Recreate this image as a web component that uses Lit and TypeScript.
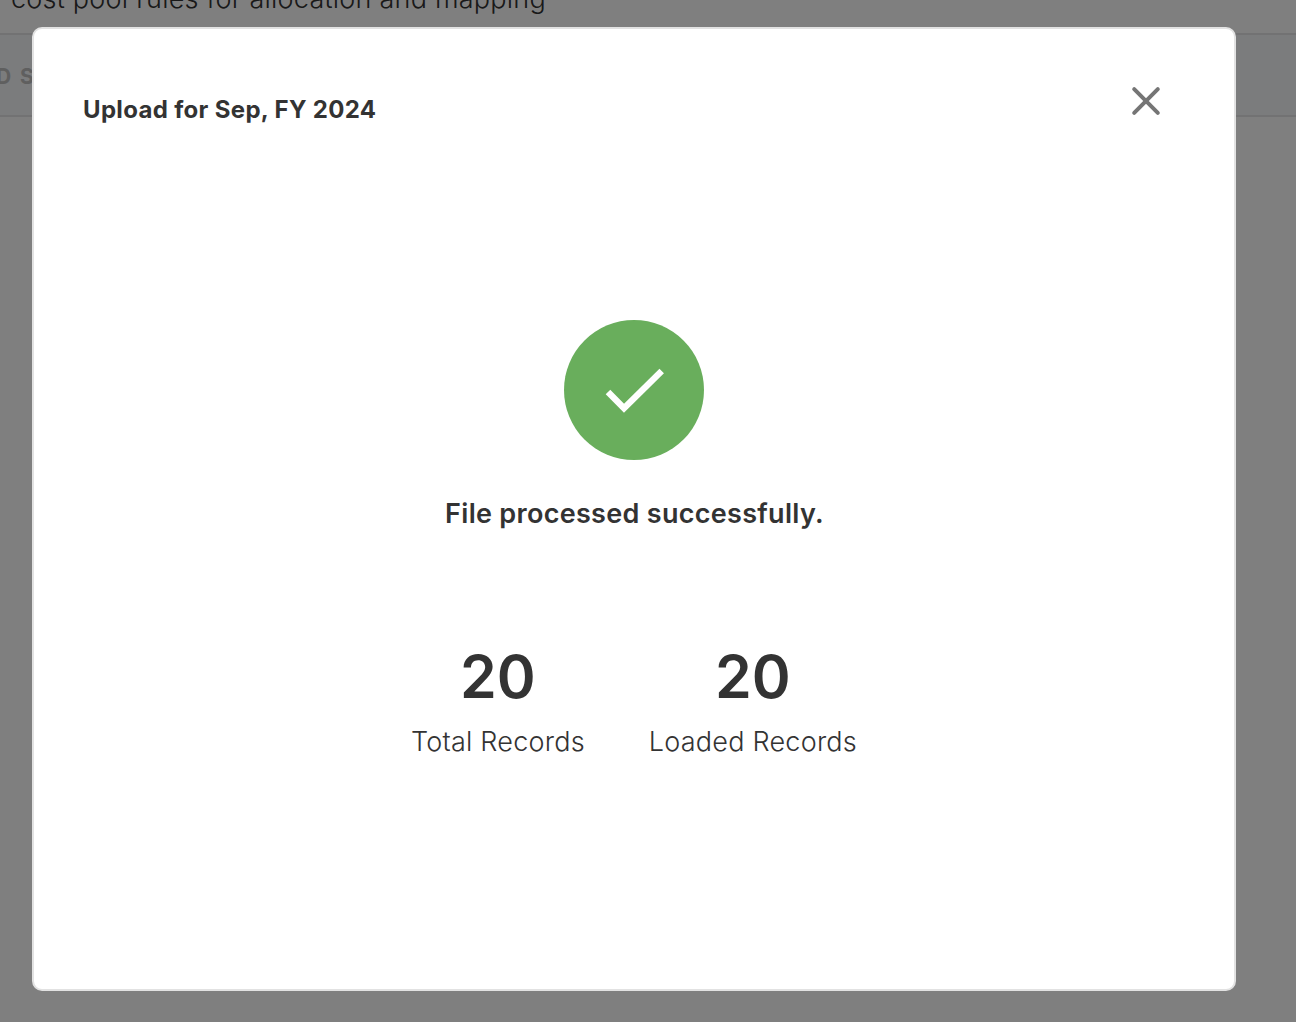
import { LitElement, html, css } from "lit";
import { customElement } from "lit/decorators.js";

@customElement("app-root")
export class AppRoot extends LitElement {
  static styles = css`
    :host {
      display: block;
      font-family: Inter, "Liberation Sans", sans-serif;
      color: #333;
    }
    .page {
      position: relative;
      height: 1022px;
      overflow: hidden;
      background: #fff;
    }
    .heading {
      display: flow-root;
      box-sizing: border-box;
      height: 35px;
      padding-left: 11px;
      font-size: 27px;
      font-weight: 300;
      line-height: 30px;
      letter-spacing: 0.23px;
      white-space: nowrap;
      border-bottom: 2px solid #e4e5e7;
    }
    .heading span {
      display: block;
      margin-top: -16px;
    }
    .tabs {
      height: 82px;
      box-sizing: border-box;
      background: #f6f8fb;
      border-bottom: 2px solid #e4e5e7;
      padding-top: 29px;
      font-size: 21px;
      font-weight: 700;
      line-height: 26px;
      letter-spacing: 1.9px;
      color: #bebebe;
      white-space: nowrap;
    }
    .tabs span {
      display: block;
      margin-left: -4px;
    }
    .overlay {
      position: absolute;
      inset: 0;
      background: rgba(0, 0, 0, 0.5);
      padding: 27px 60px 31px 32px;
      display: flex;
      box-sizing: border-box;
    }
    .modal {
      flex: 1;
      box-sizing: border-box;
      background: #fff;
      border: 2px solid #e2e2e2;
      border-radius: 10px;
      display: flex;
      flex-direction: column;
      padding: 54px 50px 0 49px;
    }
    .modal-head {
      display: flex;
      justify-content: space-between;
      align-items: flex-start;
    }
    .title {
      font-size: 24px;
      font-weight: 700;
      margin: 0;
      line-height: 54px;
      letter-spacing: 0.33px;
    }
    .close {
      all: unset;
      display: block;
      width: 30px;
      height: 30px;
      margin: 3px 23px 0 0;
      color: #757575;
    }
    .close svg {
      display: block;
    }
    .body {
      display: flex;
      flex-direction: column;
      align-items: center;
      padding-top: 183px;
    }
    .ok {
      display: block;
      width: 140px;
      height: 140px;
    }
    .msg {
      margin: 37px 0 0;
      padding-left: 2px;
      font-size: 27px;
      font-weight: 600;
      line-height: 34px;
      letter-spacing: 0.3px;
    }
    .stats {
      display: flex;
      gap: 64px;
      margin-top: 111px;
      padding-left: 1px;
      text-align: center;
    }
    .num {
      font-size: 59px;
      font-weight: 600;
      line-height: 70px;
    }
    .lab {
      margin-top: 12px;
      font-size: 27px;
      font-weight: 300;
      line-height: 36px;
      letter-spacing: 0.22px;
    }
  `;

  render() {
    return html`
      <div class="page">
        <div class="heading"><span>cost pool rules for allocation and mapping</span></div>
        <div class="tabs"><span>D S</span></div>
        <div class="overlay">
          <div class="modal">
            <div class="modal-head">
              <h2 class="title">Upload for Sep, FY 2024</h2>
              <button class="close" aria-label="Close">
                <svg width="30" height="30" viewBox="0 0 30 30" fill="none">
                  <path d="M3.2 3.2 L26.8 26.8 M26.8 3.2 L3.2 26.8" stroke="currentColor" stroke-width="4" stroke-linecap="round" />
                </svg>
              </button>
            </div>
            <div class="body">
              <svg class="ok" viewBox="0 0 140 140">
                <circle cx="70" cy="70" r="70" fill="#69ae5c" />
                <path d="M44 72 L60 88.3 L97.7 51" fill="none" stroke="#fff" stroke-width="6.4" />
              </svg>
              <p class="msg">File processed successfully.</p>
              <div class="stats">
                <div><div class="num">20</div><div class="lab">Total Records</div></div>
                <div><div class="num">20</div><div class="lab">Loaded Records</div></div>
              </div>
            </div>
          </div>
        </div>
      </div>
    `;
  }
}
